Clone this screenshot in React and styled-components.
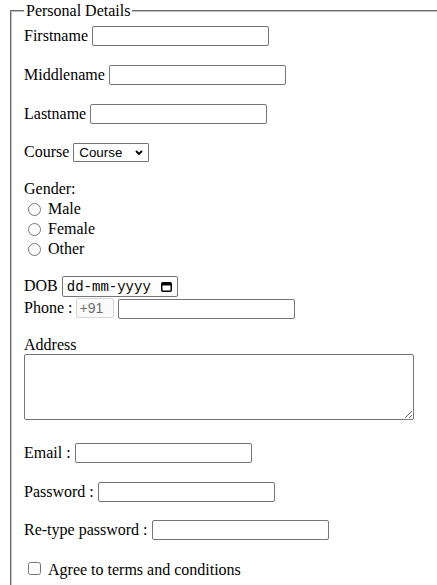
import React from 'react'
import styled, { createGlobalStyle } from 'styled-components'

const GlobalStyle = createGlobalStyle`
    html, body {
        margin: 0;
        padding: 0;
        overflow: hidden;
        background: #fff;
    }
    body {
        font-family: "Liberation Serif", "Times New Roman", serif;
        font-size: 16px;
        color: #000;
    }
`;

const Fieldset = styled.fieldset`
    margin: 2px 0 0 10px;
    width: 520px;
    min-height: 700px;
    border: 2px groove #c0c0c0;
    padding: 6px 12px 10px 12px;
    box-sizing: border-box;
`;

const Legend = styled.legend`
    padding: 0 2px;
    font-size: 16px;
    line-height: 18px;
`;

const Form = styled.div`
    display: flex;
    flex-direction: column;
    align-items: flex-start;
`;

const Row = styled.div`
    display: flex;
    align-items: baseline;
    gap: 4px;
    height: ${p => p.$h || 20}px;
    margin-top: ${p => p.$mt || 0}px;
`;

const OptionRow = styled.label`
    display: flex;
    align-items: center;
    height: 20px;
    margin-top: ${p => p.$mt || 0}px;
    line-height: 20px;
    gap: 4px;
`;

const Text = styled.span`
    line-height: 18px;
    white-space: nowrap;
`;

const Heading = styled.div`
    line-height: 20px;
    margin-top: ${p => p.$mt || 0}px;
`;

const FieldLabel = styled.div`
    line-height: 18px;
    height: 18px;
    margin-top: ${p => p.$mt || 0}px;
`;

const TextInput = styled.input`
    width: ${p => p.$w || 177}px;
    height: 20px;
    box-sizing: border-box;
    margin: 0;
    padding: 1px 2px;
    border: 1px solid #767676;
    border-radius: 2px;
    background: #fff;
    font-family: "Liberation Sans", Arial, sans-serif;
    font-size: 13.333px;
    color: #000;
    outline: none;
`;

const PrefixInput = styled(TextInput)`
    border-color: #d6d6d6;
    background: #fafafa;
    color: #6d6d6d;
    font-size: 14px;
`;

const SelectWrap = styled.span`
    position: relative;
    display: inline-flex;
    align-items: baseline;
`;

const Select = styled.select`
    appearance: none;
    -webkit-appearance: none;
    width: 76px;
    height: 19px;
    box-sizing: border-box;
    margin: 0;
    padding: 0 0 0 5px;
    border: 1px solid #767676;
    border-radius: 1px;
    background: #fff;
    font-family: "Liberation Sans", Arial, sans-serif;
    font-size: 13.333px;
    color: #000;
    outline: none;
`;

const Chevron = styled.svg`
    position: absolute;
    right: 6px;
    top: 7px;
    pointer-events: none;
`;

const DateField = styled.div`
    display: inline-flex;
    align-items: center;
    width: 116px;
    height: 21px;
    box-sizing: border-box;
    padding: 0 5px 0 4px;
    border: 1px solid #767676;
    border-radius: 2px;
    font-family: "Liberation Mono", "Courier New", monospace;
    font-size: 14px;
    color: #000;
    & > svg {
        margin-left: auto;
    }
`;

const TextArea = styled.textarea`
    display: block;
    width: 390px;
    height: 66px;
    box-sizing: border-box;
    margin: 0;
    padding: 2px;
    border: 1px solid #767676;
    border-radius: 2px;
    font-family: "Liberation Mono", monospace;
    font-size: 13.333px;
    outline: none;
`;

const Radio = styled.input`
    width: 13px;
    height: 13px;
    margin: 0 3px 0 4px;
`;

const Checkbox = styled(Radio)`
    margin-bottom: 3px;
`;

const App = () => {
    return (
        <>
            <GlobalStyle />
            <Fieldset>
                <Legend>Personal Details</Legend>
                <Form>
                    <Row>
                        <Text>Firstname</Text>
                        <TextInput type="text" />
                    </Row>
                    <Row $mt={19}>
                        <Text>Middlename</Text>
                        <TextInput type="text" />
                    </Row>
                    <Row $mt={19}>
                        <Text>Lastname</Text>
                        <TextInput type="text" />
                    </Row>
                    <Row $mt={19} $h={19}>
                        <Text>Course</Text>
                        <SelectWrap>
                            <Select defaultValue="Course">
                                <option>Course</option>
                                <option>BCA</option>
                                <option>BBA</option>
                                <option>B.Tech</option>
                            </Select>
                            <Chevron width="8" height="5" viewBox="0 0 8 5">
                                <path d="M1 1 L4 4 L7 1" fill="none" stroke="#000" strokeWidth="1.8" />
                            </Chevron>
                        </SelectWrap>
                    </Row>

                    <Heading $mt={17}>Gender:</Heading>
                    <OptionRow>
                        <Radio type="radio" name="gender" />
                        Male
                    </OptionRow>
                    <OptionRow>
                        <Radio type="radio" name="gender" />
                        Female
                    </OptionRow>
                    <OptionRow>
                        <Radio type="radio" name="gender" />
                        Other
                    </OptionRow>

                    <Row $mt={17} $h={21}>
                        <Text>DOB</Text>
                        <DateField>
                            <span>dd-mm-yyyy</span>
                            <svg width="11" height="11" viewBox="0 0 11 11">
                                <rect x="0.75" y="1.75" width="9.5" height="8.5" rx="1" fill="none" stroke="#000" strokeWidth="1.5" />
                                <rect x="1" y="2" width="9" height="2.5" fill="#000" />
                            </svg>
                        </DateField>
                    </Row>
                    <Row $mt={1}>
                        <Text>Phone :</Text>
                        <PrefixInput $w={38} type="text" defaultValue="+91" readOnly />
                        <TextInput type="text" />
                    </Row>

                    <FieldLabel $mt={18}>Address</FieldLabel>
                    <TextArea />

                    <Row $mt={23}>
                        <Text>Email :</Text>
                        <TextInput type="email" />
                    </Row>
                    <Row $mt={19}>
                        <Text>Password :</Text>
                        <TextInput type="password" />
                    </Row>
                    <Row $mt={18}>
                        <Text>Re-type password :</Text>
                        <TextInput type="password" />
                    </Row>

                    <OptionRow $mt={20}>
                        <Checkbox type="checkbox" />
                        Agree to terms and conditions
                    </OptionRow>
                </Form>
            </Fieldset>
        </>
    )
}

export default App
